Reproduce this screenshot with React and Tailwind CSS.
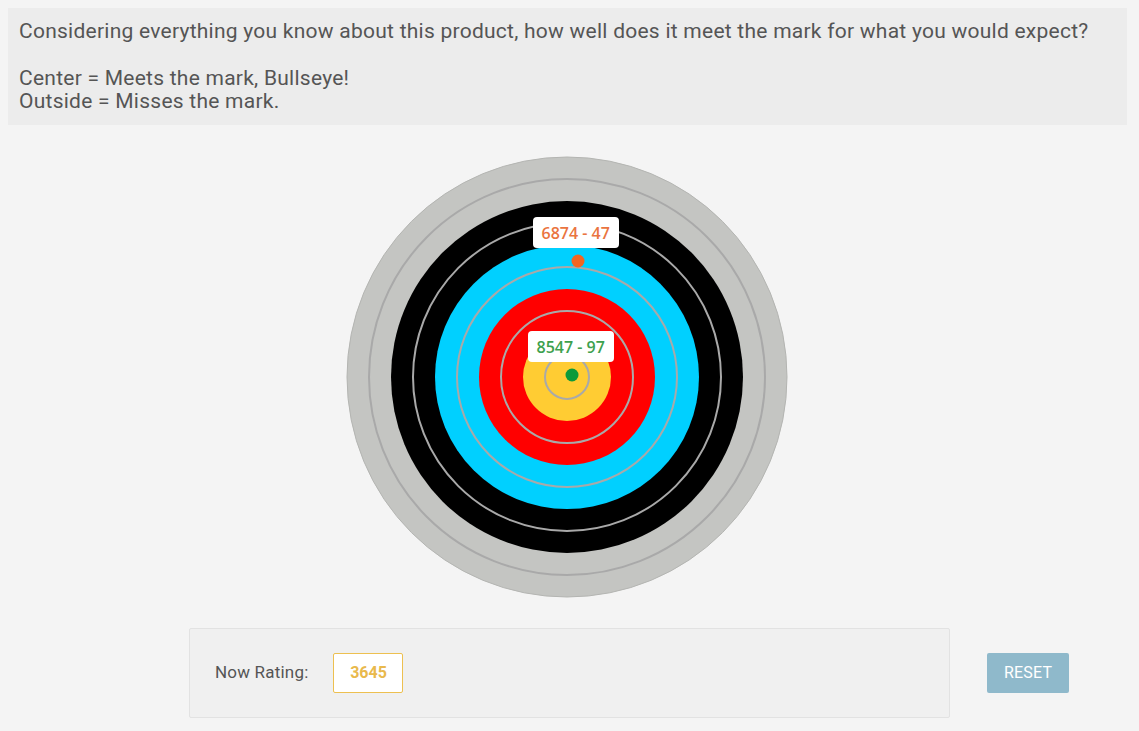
import React from "react";

const rings = [
  { r: 220, fill: "#c4c5c2" },
  { r: 176, fill: "#000000" },
  { r: 132, fill: "#00d0ff" },
  { r: 88, fill: "#ff0000" },
  { r: 44, fill: "#ffcc33" },
];

const lines = [198, 154, 110, 66, 22];

const Target = () => (
  <svg width="442" height="442" viewBox="-221 -221 442 442">
    <circle r="220" fill="#c4c5c2" stroke="#b4b5b2" strokeWidth="1" />
    {rings.slice(1).map((ring) => (
      <circle key={ring.r} r={ring.r} fill={ring.fill} />
    ))}
    {lines.map((r) => (
      <circle key={r} r={r} fill="none" stroke="#a9a9a9" strokeWidth="2" />
    ))}
    <circle cx="11" cy="-116" r="6.5" fill="#f26522" />
    <circle cx="5" cy="-2" r="6.5" fill="#0d9a3a" />
  </svg>
);

const Label = ({ text, color, className }) => (
  <div
    className={`absolute h-[31px] px-[9px] flex items-center bg-white rounded-[4px] text-[16px] font-semibold ${className}`}
    style={{ color }}
  >
    {text}
  </div>
);

export default function App() {
  return (
    <div
      className="min-h-[731px] bg-[#f4f4f4] p-2"
      style={{ fontFamily: "Roboto, 'Liberation Sans', sans-serif" }}
    >
      <div className="bg-[#ececec] mr-[4px] pl-[11px] pr-3 pt-[12px] pb-[12px] text-[21px] tracking-[0.25px] leading-[23px] text-[#555555]">
        <p>Considering everything you know about this product, how well does it meet the mark for what you would expect?</p>
        <p className="mt-[24px]">Center = Meets the mark, Bullseye!</p>
        <p>Outside = Misses the mark.</p>
      </div>

      <div className="flex justify-center pr-[6px] mt-[31px]">
        <div className="relative w-[442px] h-[442px]" style={{ fontFamily: "'Open Sans', sans-serif" }}>
          <Target />
          <Label text="6874 - 47" color="#ea7440" className="left-[187px] top-[61px]" />
          <Label text="8547 - 97" color="#3da14d" className="left-[182px] top-[175px]" />
        </div>
      </div>

      <div className="flex items-start ml-[181px] mt-[30px]">
        <div className="w-[761px] h-[90px] bg-[#f0f0f0] border border-[#e2e2e2] rounded-[2px] flex items-center pl-[25px]">
          <span className="text-[17px] tracking-[0.2px] text-[#555555]">Now Rating:</span>
          <div className="ml-[25px] w-[70px] h-[40px] bg-white border border-[#edc050] rounded-[2px] flex items-center justify-center text-[16px] font-bold text-[#e9b94c]">
            3645
          </div>
        </div>
        <button className="ml-[37px] mt-[25px] w-[82px] h-[40px] bg-[#8fb9cb] rounded-[2px] text-white text-[16px] tracking-[0.2px]">
          RESET
        </button>
      </div>
    </div>
  );
}
